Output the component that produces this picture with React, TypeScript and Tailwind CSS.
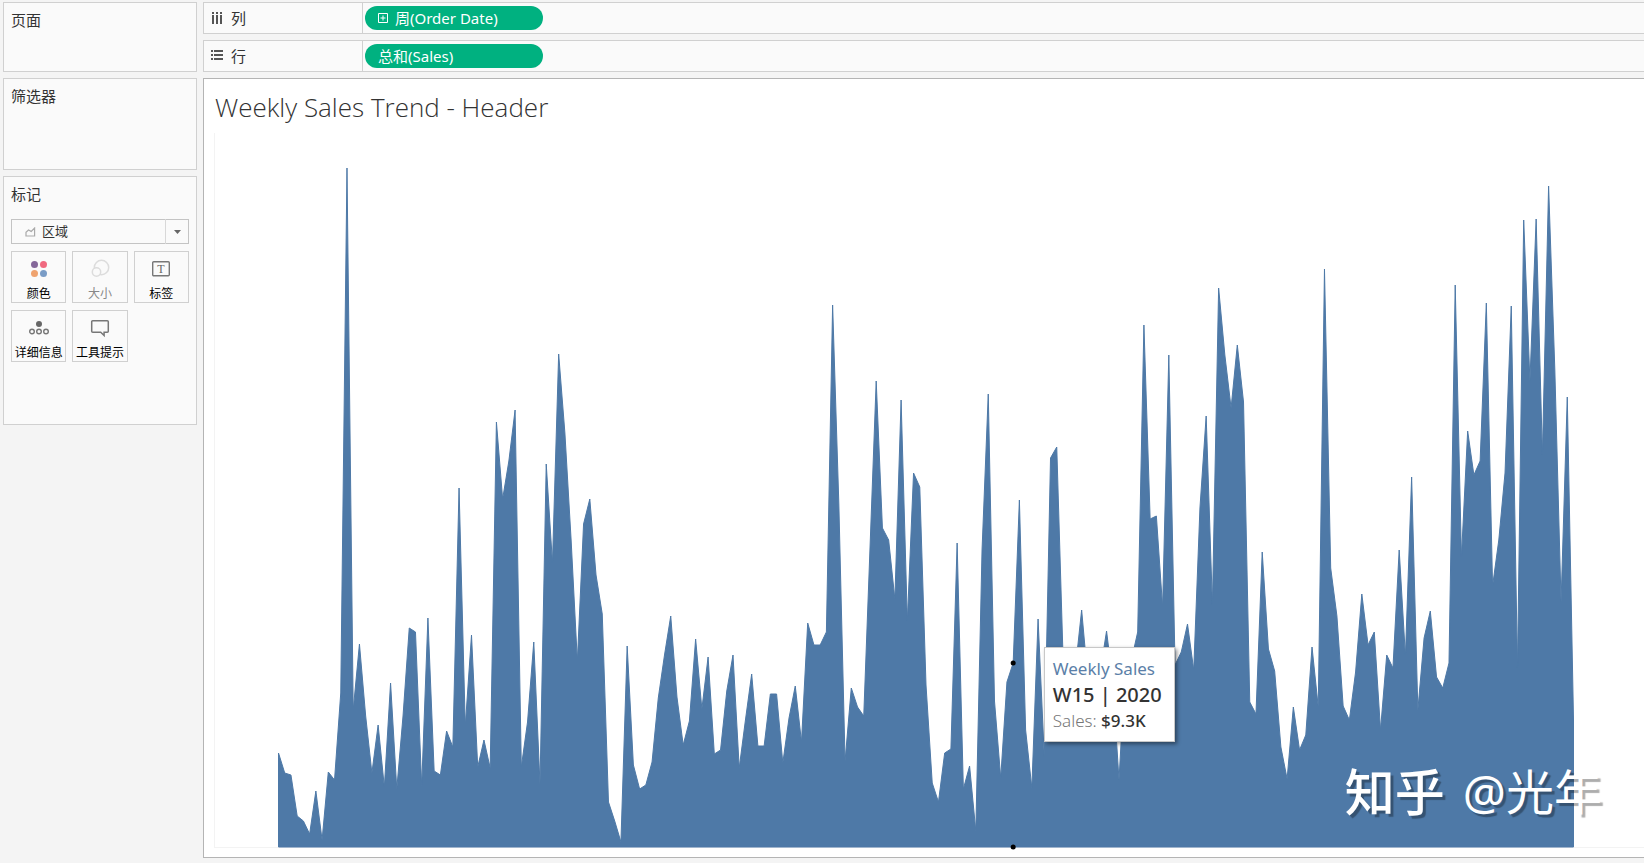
import { useState } from "react";
import type { ReactNode } from "react";

// Vertical position of every week's mark, one entry per week
const weeks = [
  753, 773, 775, 816, 821, 834, 791, 840, 772, 780, 693, 168, 710, 644, 716,
  773, 725, 787, 683, 789, 716, 628, 632, 786, 618, 771, 775, 731, 747, 488,
  726, 635, 767, 740, 768, 422, 499, 461, 410, 767, 722, 642, 784, 464, 563,
  354, 433, 540, 661, 524, 499, 575, 614, 802, 821, 842, 646, 765, 789, 785,
  762, 698, 655, 616, 697, 745, 721, 639, 709, 657, 754, 750, 691, 655, 768,
  720, 674, 746, 746, 694, 694, 763, 718, 686, 742, 623, 645, 645, 632, 305,
  504, 761, 688, 707, 716, 549, 381, 528, 540, 599, 400, 621, 473, 487, 685,
  783, 802, 753, 749, 543, 789, 766, 831, 550, 394, 701, 778, 682, 663, 500,
  730, 788, 619, 757, 458, 447, 655, 700, 668, 610, 680, 700, 671, 631, 682,
  780, 667, 660, 632, 325, 519, 516, 607, 355, 665, 652, 624, 670, 508, 416,
  605, 288, 355, 408, 345, 402, 702, 714, 552, 649, 671, 747, 779, 707, 750,
  735, 647, 707, 269, 568, 616, 706, 720, 672, 594, 645, 632, 730, 655, 668,
  550, 656, 477, 710, 638, 611, 677, 688, 663, 285, 557, 431, 475, 461, 303,
  586, 540, 473, 306, 668, 220, 381, 219, 455, 186, 370, 602, 397, 720,
];

const START = 278.5;
const STEP = 6.226;
const BASE = 847;
const SELECTED = 118;

const xOf = (i: number) => START + i * STEP;

const areaPoints = [
  `${xOf(0)},${BASE}`,
  ...weeks.map((y, i) => `${xOf(i).toFixed(2)},${y}`),
  `${xOf(weeks.length - 1)},${BASE}`,
].join(" ");

function Card({ title, className, children }: { title: string; className: string; children?: ReactNode }) {
  return (
    <section className={`border border-[#d0d0d0] bg-[#fafafa] px-[7px] pt-[5px] ${className}`}>
      <h2 className="text-[15px] leading-6">{title}</h2>
      {children}
    </section>
  );
}

function Shelf({ icon, label, children }: { icon: ReactNode; label: string; children: ReactNode }) {
  return (
    <div className="flex h-8 border border-r-0 border-[#d0d0d0] bg-[#fafafa]">
      <div className="flex w-[159px] items-center gap-[7px] border-r border-[#d0d0d0] pl-[7px] text-[15px]">
        {icon}
        {label}
      </div>
      <div className="flex items-center pl-0.5">{children}</div>
    </div>
  );
}

function Pill({ children }: { children: ReactNode }) {
  return (
    <button
      type="button"
      className="flex h-6 w-[178px] items-center gap-[7px] rounded-full bg-[#00b180] px-[13px] text-[15px] leading-6 text-white"
    >
      {children}
    </button>
  );
}

function ColumnsIcon() {
  return (
    <svg width="13" height="13" viewBox="0 0 13 13" fill="#555" aria-hidden="true">
      {[1, 5, 9].map((x) => (
        <g key={x}>
          <rect x={x} y="0" width="2" height="2" />
          <rect x={x} y="3" width="2" height="9" />
        </g>
      ))}
    </svg>
  );
}

function RowsIcon() {
  return (
    <svg width="13" height="13" viewBox="0 0 13 13" fill="#555" aria-hidden="true">
      {[0, 4, 8].map((y) => (
        <g key={y}>
          <rect x="0" y={y} width="2" height="2" />
          <rect x="3" y={y} width="9" height="2" />
        </g>
      ))}
    </svg>
  );
}

const markButtons = [
  {
    label: "颜色",
    icon: (
      <>
        <circle cx="5.5" cy="5.5" r="3.5" fill="#85689a" />
        <circle cx="14.5" cy="5.5" r="3.5" fill="#f0697f" />
        <circle cx="5.5" cy="14.5" r="3.5" fill="#efa36f" />
        <circle cx="14.5" cy="14.5" r="3.5" fill="#7a9cc6" />
      </>
    ),
  },
  {
    label: "大小",
    disabled: true,
    icon: (
      <g fill="#fafafa" stroke="#dcdcdc" strokeWidth="1.5">
        <circle cx="11.5" cy="8.5" r="7.2" />
        <circle cx="6.5" cy="13" r="4.2" />
      </g>
    ),
  },
  {
    label: "标签",
    icon: (
      <>
        <rect x="1.7" y="2.7" width="16.6" height="14" rx="1" fill="none" stroke="#777" strokeWidth="1.4" />
        <text x="10" y="14" textAnchor="middle" fontSize="12" fill="#666" fontFamily="Liberation Serif, serif">
          T
        </text>
      </>
    ),
  },
  {
    label: "详细信息",
    icon: (
      <>
        <circle cx="10" cy="6" r="3" fill="#666" />
        <g fill="none" stroke="#777" strokeWidth="1.4">
          <circle cx="3" cy="13.5" r="2.3" />
          <circle cx="10" cy="13.5" r="2.3" />
          <circle cx="17" cy="13.5" r="2.3" />
        </g>
      </>
    ),
  },
  {
    label: "工具提示",
    icon: (
      <path
        d="M2.7 2.7h14.6a1 1 0 0 1 1 1v9.6a1 1 0 0 1-1 1h-3.2v3.2l-3.4-3.2h-8a1 1 0 0 1-1-1V3.7a1 1 0 0 1 1-1z"
        fill="none"
        stroke="#777"
        strokeWidth="1.5"
      />
    ),
  },
];

function Marks() {
  const [mark, setMark] = useState("区域");

  return (
    <>
      <div className="relative mt-[13px]">
        <select
          aria-label="标记类型"
          value={mark}
          onChange={(e) => setMark(e.target.value)}
          className="block h-[25px] w-full appearance-none border border-[#c4c4c4] bg-[#fafafa] pl-[30px] text-[13px] text-[#333]"
        >
          <option>区域</option>
          <option>线</option>
          <option>条形图</option>
        </select>
        <svg
          className="pointer-events-none absolute top-2 left-3.5"
          width="11"
          height="10"
          viewBox="0 0 11 10"
          fill="none"
          stroke="#aaa"
          strokeWidth="1.2"
          aria-hidden="true"
        >
          <path d="M1 9V5.2L3.5 3l2.7 1.4L9.6 1v8z" />
        </svg>
        <span className="pointer-events-none absolute inset-y-0 right-0 flex w-6 items-center justify-center border-l border-[#d8d8d8]">
          <svg width="7" height="4" viewBox="0 0 7 4" fill="#666" aria-hidden="true">
            <path d="M0 0h7L3.5 4z" />
          </svg>
        </span>
      </div>
      <div className="mt-[7px] grid grid-cols-3 gap-x-1.5 gap-y-[7px]">
        {markButtons.map(({ label, icon, disabled }) => (
          <button
            key={label}
            type="button"
            disabled={disabled}
            className="flex h-[52px] flex-col items-center gap-[7px] border border-[#d0d0d0] pt-[7px] text-xs whitespace-nowrap text-black disabled:text-[#888]"
          >
            <svg width="20" height="20" viewBox="0 0 20 20" className="shrink-0" aria-hidden="true">
              {icon}
            </svg>
            {label}
          </button>
        ))}
      </div>
    </>
  );
}

function Tooltip() {
  return (
    <div className="absolute top-[72%] left-[58%] border border-[#c8c8c8] bg-white pt-2 pr-3 pb-[7px] pl-2 text-[17px] leading-[26px] whitespace-nowrap text-[#333] shadow-[2px_2px_4px_rgba(0,0,0,0.45)]">
      <p className="text-[#5b7fa8]">Weekly Sales</p>
      <p className="text-xl leading-[26px] font-medium">W15 | 2020</p>
      <p>
        <span className="font-light text-[#777]">Sales: </span>
        <span className="font-medium">$9.3K</span>
      </p>
    </div>
  );
}

function Chart() {
  return (
    <div className="relative ml-2.5 flex-1 border-b border-l border-[#f3f3f3]">
      <svg
        className="absolute inset-0 h-full w-full overflow-visible"
        viewBox="215 133 1429 714"
        preserveAspectRatio="none"
        role="img"
        aria-label="Weekly Sales"
      >
        <polygon points={areaPoints} fill="#4e79a7" stroke="#4e79a7" />
        <circle cx={xOf(SELECTED)} cy={weeks[SELECTED]} r="2.5" />
        <circle cx={xOf(SELECTED)} cy={BASE} r="2.5" />
      </svg>
      <Tooltip />
      <p className="absolute right-[42px] bottom-5 flex items-center gap-[18px] text-5xl leading-[70px] whitespace-nowrap text-white [text-shadow:3px_3px_1px_rgba(0,0,0,0.32)]">
        <span className="text-[50px] font-medium">知乎</span>
        <span>@光年</span>
      </p>
    </div>
  );
}

export default function App() {
  return (
    <div className="flex min-h-screen gap-1.5 bg-[#f4f4f4] pt-0.5 pb-[5px] pl-[3px] font-['Noto_Sans','Noto_Sans_CJK_SC',sans-serif] text-[#333]">
      <aside className="flex w-[194px] shrink-0 flex-col gap-1.5">
        <Card title="页面" className="h-[70px]" />
        <Card title="筛选器" className="h-[92px]" />
        <Card title="标记" className="h-[249px]">
          <Marks />
        </Card>
      </aside>
      <main className="flex min-w-0 flex-1 flex-col gap-1.5 overflow-hidden">
        <Shelf icon={<ColumnsIcon />} label="列">
          <Pill>
            <svg width="10" height="10" viewBox="0 0 10 10" fill="none" stroke="white" aria-hidden="true">
              <path d="M0.5 0.5h9v9h-9zM5 2.5v5M2.5 5h5" />
            </svg>
            周(Order Date)
          </Pill>
        </Shelf>
        <Shelf icon={<RowsIcon />} label="行">
          <Pill>总和(Sales)</Pill>
        </Shelf>
        <section className="flex flex-1 flex-col border border-r-0 border-[#b4b4b4] bg-white pt-2.5 pb-[9px]">
          <h1 className="mb-2 pl-[11px] font-['Open_Sans',sans-serif] text-[26px] leading-9 font-light">
            Weekly Sales Trend - Header
          </h1>
          <Chart />
        </section>
      </main>
    </div>
  );
}
